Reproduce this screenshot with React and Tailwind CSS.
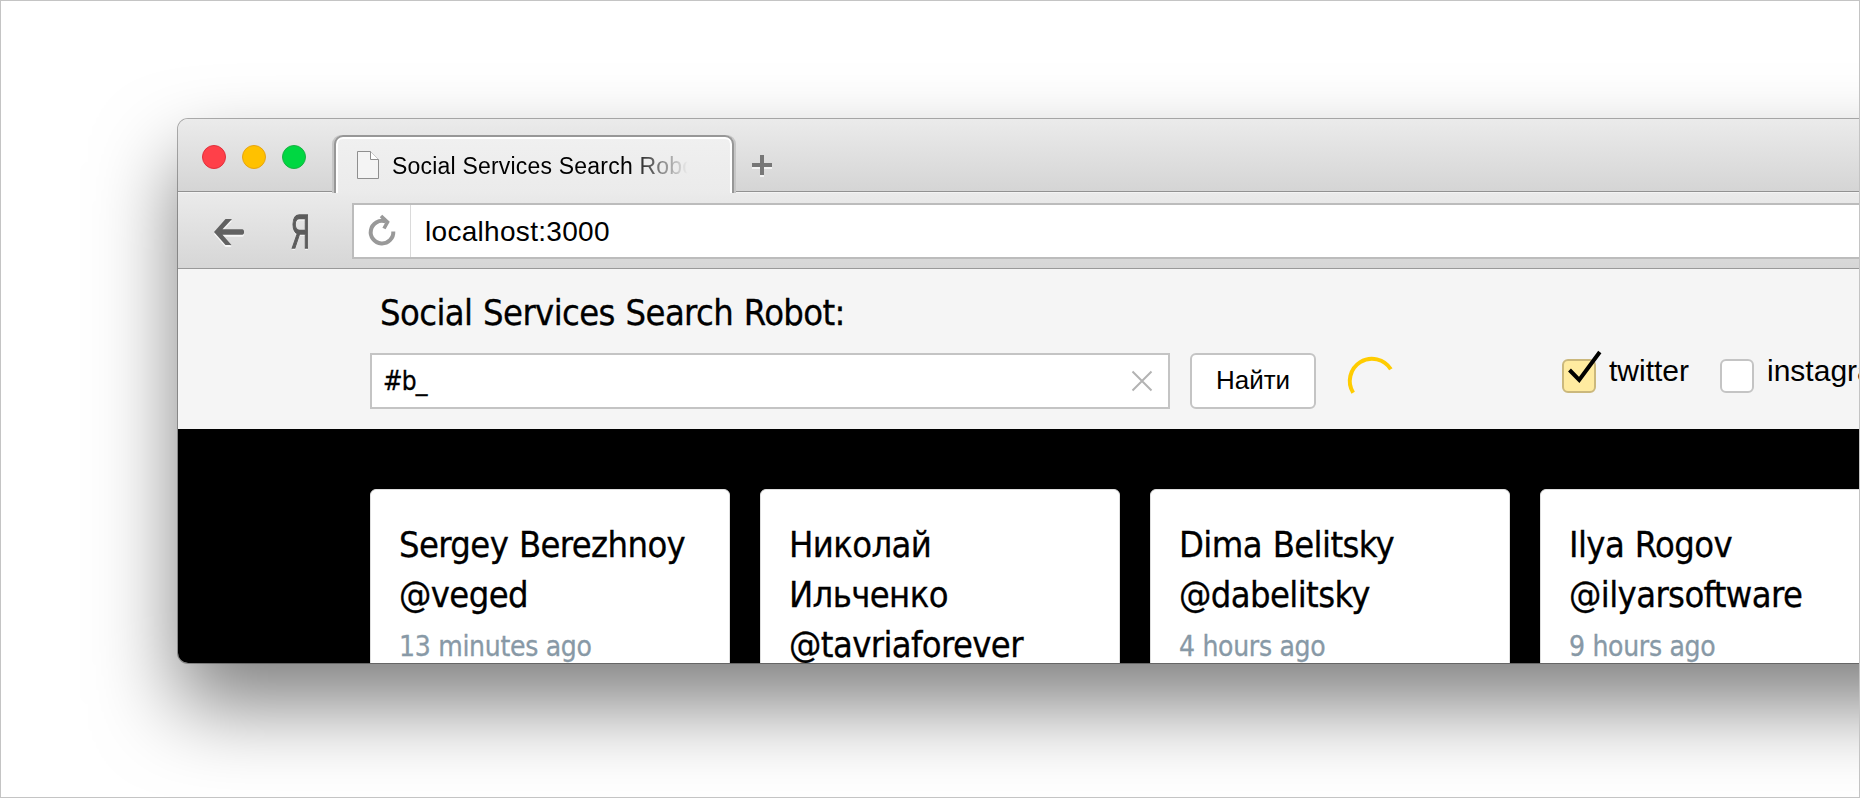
const cards = [
  { lines: ["Sergey Berezhnoy", "@veged"], time: "13 minutes ago" },
  { lines: ["Николай", "Ильченко", "@tavriaforever"] },
  { lines: ["Dima Belitsky", "@dabelitsky"], time: "4 hours ago" },
  { lines: ["Ilya Rogov", "@ilyarsoftware"], time: "9 hours ago" },
];

const arrow = "M1 14L12.5 1H19L9.5 11.2H29.5A1.6 2.8 0 0 1 29.5 16.8H9.5L18.5 27H12.5Z";

function TitleBar() {
  return (
    <div className="flex h-[73px] items-end bg-linear-to-b from-[#ebebeb] to-[#d5d5d5] border-b border-[#929292]">
      <div className="flex gap-4 pl-6 pb-[22px] w-[156px] shrink-0">
        <span className="size-6 rounded-full bg-[#ff4049] border border-[#e0303c]" />
        <span className="size-6 rounded-full bg-[#ffc100] border border-[#e5a413]" />
        <span className="size-6 rounded-full bg-[#00d742] border border-[#1bb043]" />
      </div>
      <div className="relative -mb-[2px] flex h-[58px] w-[400px] shrink-0 items-start rounded-t-[9px] border-2 border-b-0 border-[#979797] bg-linear-to-b from-[#f0f0f0] to-[#ebebeb] shadow-[inset_0_2px_0_#fff,inset_2px_0_0_#fff,inset_-2px_0_0_#fff,-2px_0_0_#c6c6c6,2px_0_0_#c6c6c6]">
        <svg className="mt-[13px] ml-[20px] shrink-0" width="24" height="30" viewBox="0 0 24 30">
          <path d="M1.5 1.5H14.5L22.5 9.5V28.5H1.5Z" fill="#f4f4f4" stroke="#8f8f8f" />
          <path d="M14.5 1.5V9.5H22.5" fill="#fff" stroke="#8f8f8f" />
        </svg>
        <div className="ml-[12px] mt-[13px] w-[296px] overflow-hidden whitespace-nowrap mask-r-from-80% mask-r-to-100% font-['Liberation_Sans',sans-serif] text-[23px] leading-[32px] tracking-[0.2px] text-black">
          Social Services Search Robot
        </div>
      </div>
      <svg className="ml-[17px] mb-[13px]" width="22" height="24" viewBox="0 0 22 24">
        <path d="M1 13H21M11 3V23" stroke="#f4f4f4" strokeWidth="4" />
        <path d="M1 11H21M11 1V21" stroke="#777" strokeWidth="4" />
      </svg>
    </div>
  );
}

function Toolbar() {
  return (
    <div className="flex h-[77px] items-start border-b border-[#999] bg-linear-to-b from-[#ebebeb] to-[#d6d6d6] shadow-[inset_0_1px_0_#f4f4f4]">
      <svg className="ml-[35px] mt-[26px] shrink-0" width="33" height="30" viewBox="0 0 33 30">
        <path transform="translate(0 2)" d={arrow} fill="#f6f6f6" />
        <path d={arrow} fill="#626262" />
      </svg>
      <span className="ml-[35px] mt-[16px] flex w-[38px] justify-center">
        <span className="scale-x-[0.54] font-['Liberation_Sans',sans-serif] text-[48px] leading-[48px] text-[#5c5c5c] [-webkit-text-stroke:1.5px_#5c5c5c] [text-shadow:0_2px_0_#f4f4f4]">Я</span>
      </span>
      <div className="ml-[33px] mt-[11px] flex h-[56px] flex-1 border-2 border-[#bcbcbc] bg-white">
        <div className="flex w-[57px] shrink-0 justify-center border-r border-[#dadada]">
          <svg className="mt-[9px]" width="30" height="34" viewBox="0 0 30 34">
            <path d="M26.3 17.5A11.3 11.3 0 1 1 18.5 7.4" fill="none" stroke="#999" strokeWidth="4" />
            <path d="M14 2L20.5 8.2L17 14.5" fill="none" stroke="#999" strokeWidth="3.6" />
          </svg>
        </div>
        <div className="ml-[14px] font-['Liberation_Sans',sans-serif] text-[28px] leading-[54px] tracking-[0.3px] text-black">localhost:3000</div>
      </div>
    </div>
  );
}

function Check({ label, checked }) {
  return (
    <div className="flex">
      <span
        className={
          checked
            ? "mt-[6px] size-[34px] shrink-0 rounded-[6px] border-2 border-[#cbb87c] bg-[#ffeba0]"
            : "mt-[6px] size-[34px] shrink-0 rounded-[6px] border-2 border-[#c4c4c4] bg-white"
        }
      >
        {checked && (
          <svg className="-mt-[12px] overflow-visible" width="40" height="44" viewBox="0 0 40 44">
            <path d="M5.5 21L15.2 31L35.8 3" fill="none" stroke="#000" strokeWidth="4" />
          </svg>
        )}
      </span>
      <span className="ml-[13px] font-['Liberation_Sans',sans-serif] text-[30px] leading-[36px] text-black">{label}</span>
    </div>
  );
}

function SearchPanel() {
  return (
    <div className="h-[160px] bg-[#f5f5f5] pl-[192px] pt-[20px]">
      <h1 className="h-[64px] pl-[10px] font-['DejaVu_Sans_Condensed','DejaVu_Sans',sans-serif] text-[36px] leading-[48px] tracking-[-0.6px] [word-spacing:1px] [-webkit-text-stroke:0.3px_#000] text-black">
        Social Services Search Robot:
      </h1>
      <div className="flex">
        <div className="flex h-[56px] w-[800px] shrink-0 items-center justify-between border-2 border-[#c4c4c4] bg-white pl-[11px] pr-[15px]">
          <span className="font-['DejaVu_Sans_Condensed','DejaVu_Sans',sans-serif] text-[26px] leading-[52px] -mt-px tracking-[-0.8px] [-webkit-text-stroke:0.3px_#000] text-black">#b_</span>
          <svg width="22" height="22" viewBox="0 0 22 22">
            <path d="M1.5 1.5L20.5 20.5M20.5 1.5L1.5 20.5" stroke="#b3b3b3" strokeWidth="2" />
          </svg>
        </div>
        <button className="ml-[20px] h-[56px] w-[126px] shrink-0 rounded-[6px] border-2 border-[#c4c4c4] bg-white pb-[2px] font-['Liberation_Sans',sans-serif] text-[26px] leading-[50px] text-black">
          Найти
        </button>
        <svg className="ml-[30px] shrink-0" width="52" height="56" viewBox="0 0 52 56">
          <circle cx="26" cy="28" r="22.2" pathLength="360" strokeDasharray="180 180" transform="rotate(148 26 28)" fill="none" stroke="#ffcc00" strokeWidth="4" />
        </svg>
        <div className="ml-[164px] flex gap-[31px]">
          <Check label="twitter" checked />
          <Check label="instagram" />
        </div>
      </div>
    </div>
  );
}

function Card({ lines, time }) {
  return (
    <article className="h-[300px] w-[360px] shrink-0 rounded-[6px] border border-[#dedede] bg-white pl-[28px] pt-[30px] font-['DejaVu_Sans_Condensed','DejaVu_Sans',sans-serif]">
      {lines.map((line) => (
        <div key={line} className="whitespace-nowrap text-[36px] leading-[50px] tracking-[-0.6px] [word-spacing:1px] [-webkit-text-stroke:0.3px_#000] text-black">{line}</div>
      ))}
      {time && <div className="pt-px text-[28px] leading-[52px] tracking-[-0.3px] [-webkit-text-stroke:0.3px_#8899a6] text-[#8899a6]">{time}</div>}
    </article>
  );
}

export default function App() {
  return (
    <div className="h-[798px] w-[1860px] overflow-hidden border border-[#c4c4c4] bg-white pl-[177px] pt-[118px]">
      <div className="w-[1900px] rounded-[10px] shadow-[0_0_0_1px_rgba(0,0,0,0.3),0_42px_82px_rgba(0,0,0,0.5)]">
        <div className="h-[544px] overflow-hidden rounded-[10px]">
          <TitleBar />
          <Toolbar />
          <SearchPanel />
          <div className="flex h-[234px] gap-[30px] overflow-hidden bg-black pl-[192px] pt-[60px]">
            {cards.map((card) => (
              <Card key={card.lines[0]} {...card} />
            ))}
          </div>
        </div>
      </div>
    </div>
  );
}
